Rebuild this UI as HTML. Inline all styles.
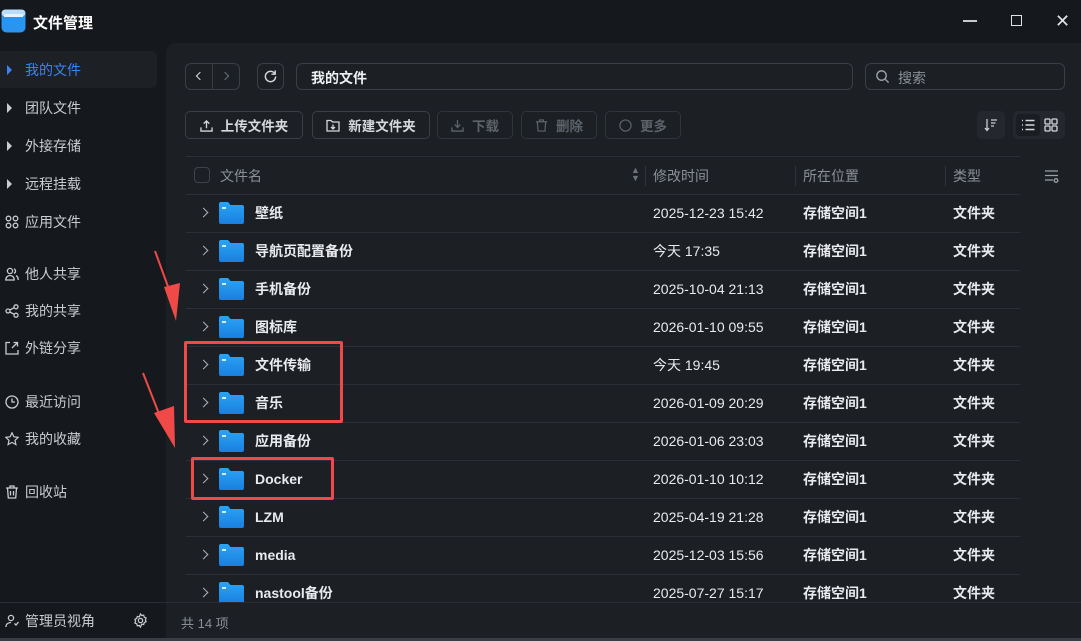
<!DOCTYPE html><html><head><meta charset="utf-8"><style>
*{box-sizing:border-box;margin:0;padding:0}
body{width:1081px;height:641px;background:#15181c;font-family:"Liberation Sans","Noto Sans CJK SC",sans-serif;color:#d6d8dc;position:relative;overflow:hidden;font-size:14px}
.abs{position:absolute}
.nav{position:absolute;left:0;width:157px;height:36px;display:flex;align-items:center;padding-left:25px;font-size:14px;color:#c9ccd1}
.nav .ic{position:absolute;left:5px;top:11px;width:14px;height:14px}
.tri{position:absolute;left:7px;top:13px;width:0;height:0;border-left:5px solid #c9ccd1;border-top:5px solid transparent;border-bottom:5px solid transparent}
.panel{left:166px;top:43px;width:915px;height:560px;background:#1c1f24;border-top-left-radius:10px}
.box{position:absolute;border:1px solid #3a3f46;border-radius:6px}
.btn{position:absolute;top:111px;height:28px;border:1px solid #3a3f46;border-radius:5px;display:flex;align-items:center;justify-content:center;font-size:13.5px;font-weight:bold;color:#d6d8dc;gap:8px}
.btn.dis{color:#5d636b;border-color:#30353b}
.hl{position:absolute;left:186px;width:834px;height:1px;background:#2c3036}
.row{position:absolute;left:186px;width:834px;height:38px}
.row .ch{position:absolute;left:14px;top:15px;width:7px;height:7px;border-right:1.5px solid #aeb2b8;border-top:1.5px solid #aeb2b8;transform:rotate(45deg)}
.fold{position:absolute;left:33px;top:8px;width:25px;height:22px}
.cell{position:absolute;top:0;height:38px;display:flex;align-items:center;font-size:14px;color:#e8eaed}
.nm{left:69px;font-weight:bold}
.c2{left:467px}
.c3{left:617px;font-weight:bold}
.c4{left:767px;font-weight:bold}
.hd{position:absolute;top:166px;font-size:14px;color:#8b9097}
.red{position:absolute;border:3px solid #f04a48;border-radius:2px}
</style></head><body>
<svg class="abs" style="left:1px;top:9px" width="25" height="24" viewBox="0 0 25 24"><rect x="0.5" y="0.5" width="24" height="23" rx="5" fill="#2a95f0"/><rect x="0.5" y="0.5" width="24" height="7" rx="4" fill="#b9ddfb"/><rect x="3" y="5" width="19" height="3" fill="#e6f3fe"/></svg>
<div class="abs" style="left:33px;top:12px;font-size:15px;font-weight:bold;color:#fff">文件管理</div>
<div class="abs" style="left:963px;top:20px;width:14px;height:2px;background:#c8cacd"></div>
<div class="abs" style="left:1011px;top:15px;width:11px;height:11px;border:1.5px solid #e0e2e4"></div>
<div class="abs" style="left:1055px;top:11px;font-size:18px;color:#e0e2e4">✕</div>

<div class="abs" style="left:0;top:51px;width:157px;height:37px;background:#1d2025;border-radius:0 6px 6px 0"></div>
<div class="nav" style="top:52px;color:#3b82f6"><span class="tri" style="border-left-color:#3b82f6"></span>我的文件</div>
<div class="nav" style="top:90px"><span class="tri"></span>团队文件</div>
<div class="nav" style="top:128px"><span class="tri"></span>外接存储</div>
<div class="nav" style="top:166px"><span class="tri"></span>远程挂载</div>
<div class="nav" style="top:204px"><svg class="ic" viewBox="0 0 14 14" fill="none" stroke="#c9ccd1" stroke-width="1.3"><circle cx="3.5" cy="3.5" r="2.3"/><circle cx="10.5" cy="3.5" r="2.3"/><circle cx="3.5" cy="10.5" r="2.3"/><circle cx="10.5" cy="10.5" r="2.3"/></svg>应用文件</div>
<div class="nav" style="top:256px"><svg class="ic" viewBox="0 0 14 14" fill="none" stroke="#c9ccd1" stroke-width="1.3"><circle cx="5" cy="4" r="2.6"/><path d="M0.8 13c0-3 2-4.5 4.2-4.5S9.2 10 9.2 13zM9 1.8a2.5 2.5 0 010 4.6M11 8.6c1.3.6 2.2 2 2.2 4.4"/></svg>他人共享</div>
<div class="nav" style="top:293px"><svg class="ic" viewBox="0 0 14 14" fill="none" stroke="#c9ccd1" stroke-width="1.3"><circle cx="3" cy="7" r="2"/><circle cx="11" cy="2.8" r="2"/><circle cx="11" cy="11.2" r="2"/><path d="M4.8 6l4.4-2.3M4.8 8l4.4 2.3"/></svg>我的共享</div>
<div class="nav" style="top:330px"><svg class="ic" viewBox="0 0 14 14" fill="none" stroke="#c9ccd1" stroke-width="1.3"><path d="M5 1.5H1v11.5h12V9M7 7l5.5-5.5M8.5 1.5h4v4"/></svg>外链分享</div>
<div class="nav" style="top:384px"><svg class="ic" viewBox="0 0 14 14" fill="none" stroke="#c9ccd1" stroke-width="1.3"><circle cx="7" cy="7" r="6"/><path d="M7 3.5V7h3"/></svg>最近访问</div>
<div class="nav" style="top:421px"><svg class="ic" viewBox="0 0 14 14" fill="none" stroke="#c9ccd1" stroke-width="1.2"><path d="M7 .8l1.9 4 4.3.5-3.2 3 .9 4.3L7 10.4l-3.9 2.2.9-4.3-3.2-3 4.3-.5z"/></svg>我的收藏</div>
<div class="nav" style="top:474px"><svg class="ic" viewBox="0 0 14 14" fill="none" stroke="#c9ccd1" stroke-width="1.3"><path d="M1 3h12M5 3V1h4v2M2.5 3l.8 10h7.4l.8-10M5.5 6v4.5M8.5 6v4.5"/></svg>回收站</div>
<div class="abs" style="left:0;top:602px;width:166px;height:1px;background:#2a2e34"></div>
<div class="nav" style="top:603px"><svg class="ic" viewBox="0 0 14 14" fill="none" stroke="#c9ccd1" stroke-width="1.3"><circle cx="6" cy="4" r="2.6"/><path d="M1 13c0-3 2.2-4.5 5-4.5M9.5 9.5l1.5 1.5 2.5-3"/></svg>管理员视角</div>
<svg class="abs" style="left:133px;top:613px" width="15" height="15" viewBox="0 0 16 16" fill="none" stroke="#c9ccd1" stroke-width="1.3"><path d="M8 1l1.3 1.7 2.1-.4.6 2.1 2 .9-.8 2 .8 2-2 .9-.6 2.1-2.1-.4L8 15l-1.3-1.7-2.1.4-.6-2.1-2-.9.8-2-.8-2 2-.9.6-2.1 2.1.4z"/><circle cx="8" cy="8" r="2.3"/></svg>

<div class="abs panel"></div>

<div class="box" style="left:185px;top:63px;width:55px;height:27px"></div>
<div class="abs" style="left:212px;top:63px;width:1px;height:27px;background:#3a3f46"></div>
<div class="abs" style="left:197px;top:73px;width:6px;height:6px;border-left:1.5px solid #d6d8dc;border-bottom:1.5px solid #d6d8dc;transform:rotate(45deg)"></div>
<div class="abs" style="left:222px;top:73px;width:6px;height:6px;border-right:1.5px solid #6a7078;border-top:1.5px solid #6a7078;transform:rotate(45deg)"></div>
<div class="box" style="left:257px;top:63px;width:27px;height:27px"></div>
<svg class="abs" style="left:263px;top:69px" width="15" height="15" viewBox="0 0 16 16" fill="none" stroke="#d6d8dc" stroke-width="1.5"><path d="M13.5 8A5.5 5.5 0 118 2.5c2 0 3.6 1 4.6 2.6M13 1.5v4h-4"/></svg>
<div class="box" style="left:296px;top:63px;width:557px;height:27px"></div>
<div class="abs" style="left:311px;top:68px;font-size:14px;font-weight:bold;color:#eef0f2">我的文件</div>
<div class="box" style="left:865px;top:63px;width:200px;height:27px"></div>
<svg class="abs" style="left:875px;top:69px" width="15" height="15" viewBox="0 0 16 16" fill="none" stroke="#9aa0a6" stroke-width="1.5"><circle cx="7" cy="7" r="5"/><path d="M11 11l3.5 3.5"/></svg>
<div class="abs" style="left:898px;top:68px;font-size:14px;color:#8b9097">搜索</div>

<div class="btn" style="left:185px;width:118px"><svg width="13" height="13" viewBox="0 0 14 14" fill="none" stroke="#d6d8dc" stroke-width="1.4"><path d="M7 10V2M4 5l3-3 3 3M1 9v4h12V9"/></svg>上传文件夹</div>
<div class="btn" style="left:312px;width:118px"><svg width="14" height="13" viewBox="0 0 14 13" fill="none" stroke="#d6d8dc" stroke-width="1.3"><path d="M1 1.5h4l1.5 1.5H13v9H1zM7 5.5v4.5M5 8l2 2 2-2"/></svg>新建文件夹</div>
<div class="btn dis" style="left:437px;width:76px"><svg width="13" height="13" viewBox="0 0 14 14" fill="none" stroke="#5d636b" stroke-width="1.4"><path d="M7 1v8M4 6l3 3 3-3M1 9v4h12V9"/></svg>下载</div>
<div class="btn dis" style="left:521px;width:76px"><svg width="13" height="13" viewBox="0 0 14 14" fill="none" stroke="#5d636b" stroke-width="1.3"><path d="M1 3h12M5 3V1h4v2M2.5 3l.8 10h7.4l.8-10"/></svg>删除</div>
<div class="btn dis" style="left:605px;width:76px"><svg width="13" height="13" viewBox="0 0 14 14" fill="none" stroke="#5d636b" stroke-width="1.3"><circle cx="7" cy="7" r="6"/></svg>更多</div>
<div class="abs" style="left:977px;top:111px;width:28px;height:28px;background:#24282e;border-radius:5px"></div>
<svg class="abs" style="left:983px;top:117px" width="16" height="16" viewBox="0 0 16 16" fill="none" stroke="#c9ccd1" stroke-width="1.3"><path d="M4 2v11M2 11l2 2.5L6 11M8 3h6M8 6h4.5M8 9h3"/></svg>
<div class="abs" style="left:1013px;top:111px;width:52px;height:28px;background:#24282e;border-radius:5px"></div>
<div class="abs" style="left:1016px;top:114px;width:24px;height:22px;background:#1a1d21;border-radius:4px"></div>
<svg class="abs" style="left:1021px;top:118px" width="14" height="14" viewBox="0 0 14 14" fill="none" stroke="#d6d8dc" stroke-width="1.4"><path d="M1 2.5h1M1 7h1M1 11.5h1M4.5 2.5h9M4.5 7h9M4.5 11.5h9"/></svg>
<svg class="abs" style="left:1044px;top:118px" width="14" height="14" viewBox="0 0 14 14" fill="none" stroke="#d6d8dc" stroke-width="1.3"><rect x="1" y="1" width="5" height="5" rx="1"/><rect x="8" y="1" width="5" height="5" rx="1"/><rect x="1" y="8" width="5" height="5" rx="1"/><rect x="8" y="8" width="5" height="5" rx="1"/></svg>

<div class="hl" style="top:156px"></div>
<div class="abs" style="left:194px;top:167px;width:16px;height:16px;border:1.5px solid #3e434a;border-radius:4px"></div>
<div class="hd" style="left:220px">文件名</div>
<div class="abs" style="left:631px;top:166px;font-size:9px;color:#6e747b;line-height:8px">▲<br>▼</div>
<div class="abs" style="left:645px;top:166px;width:1px;height:20px;background:#30343a"></div>
<div class="hd" style="left:653px">修改时间</div>
<div class="abs" style="left:795px;top:166px;width:1px;height:20px;background:#30343a"></div>
<div class="hd" style="left:803px">所在位置</div>
<div class="abs" style="left:945px;top:166px;width:1px;height:20px;background:#30343a"></div>
<div class="hd" style="left:953px">类型</div>
<svg class="abs" style="left:1044px;top:169px" width="16" height="15" viewBox="0 0 16 15" fill="none" stroke="#9aa0a6" stroke-width="1.3"><path d="M1 2h13M1 6.5h13M1 11h8"/><circle cx="12" cy="11.5" r="1.8"/></svg>
<div class="hl" style="top:194px"></div>

<div id="rows"></div>
<script>
var d=[["壁纸","2025-12-23 15:42"],["导航页配置备份","今天 17:35"],["手机备份","2025-10-04 21:13"],["图标库","2026-01-10 09:55"],["文件传输","今天 19:45"],["音乐","2026-01-09 20:29"],["应用备份","2026-01-06 23:03"],["Docker","2026-01-10 10:12"],["LZM","2025-04-19 21:28"],["media","2025-12-03 15:56"],["nastool备份","2025-07-27 15:17"]];
var h="";d.forEach(function(r,i){var t=194+i*38;h+='<div class="row" style="top:'+t+'px"><span class="ch"></span><svg class="fold" viewBox="0 0 25 22"><defs><linearGradient id="g" x1="0" y1="0" x2="0" y2="1"><stop offset="0" stop-color="#2aa4f4"/><stop offset="1" stop-color="#1a7fe0"/></linearGradient></defs><path d="M2 0h7l2.5 3H23a2 2 0 012 2v15a2 2 0 01-2 2H2a2 2 0 01-2-2V2a2 2 0 012-2z" fill="url(#g)"/><rect x="3" y="5" width="4" height="2" fill="#d6ecfc"/></svg><span class="cell nm">'+r[0]+'</span><span class="cell c2">'+r[1]+'</span><span class="cell c3">存储空间1</span><span class="cell c4">文件夹</span></div>';if(i<10)h+='<div class="hl" style="top:'+(t+38)+'px"></div>';});
document.getElementById("rows").innerHTML=h;
</script>
<div class="abs" style="left:166px;top:602px;width:915px;height:36px;background:#1c1f24"></div>
<div class="abs" style="left:166px;top:602px;width:915px;height:1px;background:#2a2e34"></div>
<div class="abs" style="left:0;top:638px;width:1081px;height:3px;background:#3a3e44"></div>
<div class="abs" style="left:181px;top:613px;font-size:13px;color:#8b9097">共 14 项</div>

<div class="red" style="left:184px;top:341px;width:159px;height:82px"></div>
<div class="red" style="left:191px;top:457px;width:143px;height:43px"></div>
<svg class="abs" style="left:140px;top:245px" width="45" height="210" viewBox="0 0 45 210"><path d="M15 6l19 52" stroke="#f04a48" stroke-width="2" fill="none"/><path d="M24 42l12 34 4-38z" fill="#f04a48"/><path d="M3 128l22 56" stroke="#f04a48" stroke-width="2" fill="none"/><path d="M14 168l21 35-1-42z" fill="#f04a48"/></svg>
</body></html>
